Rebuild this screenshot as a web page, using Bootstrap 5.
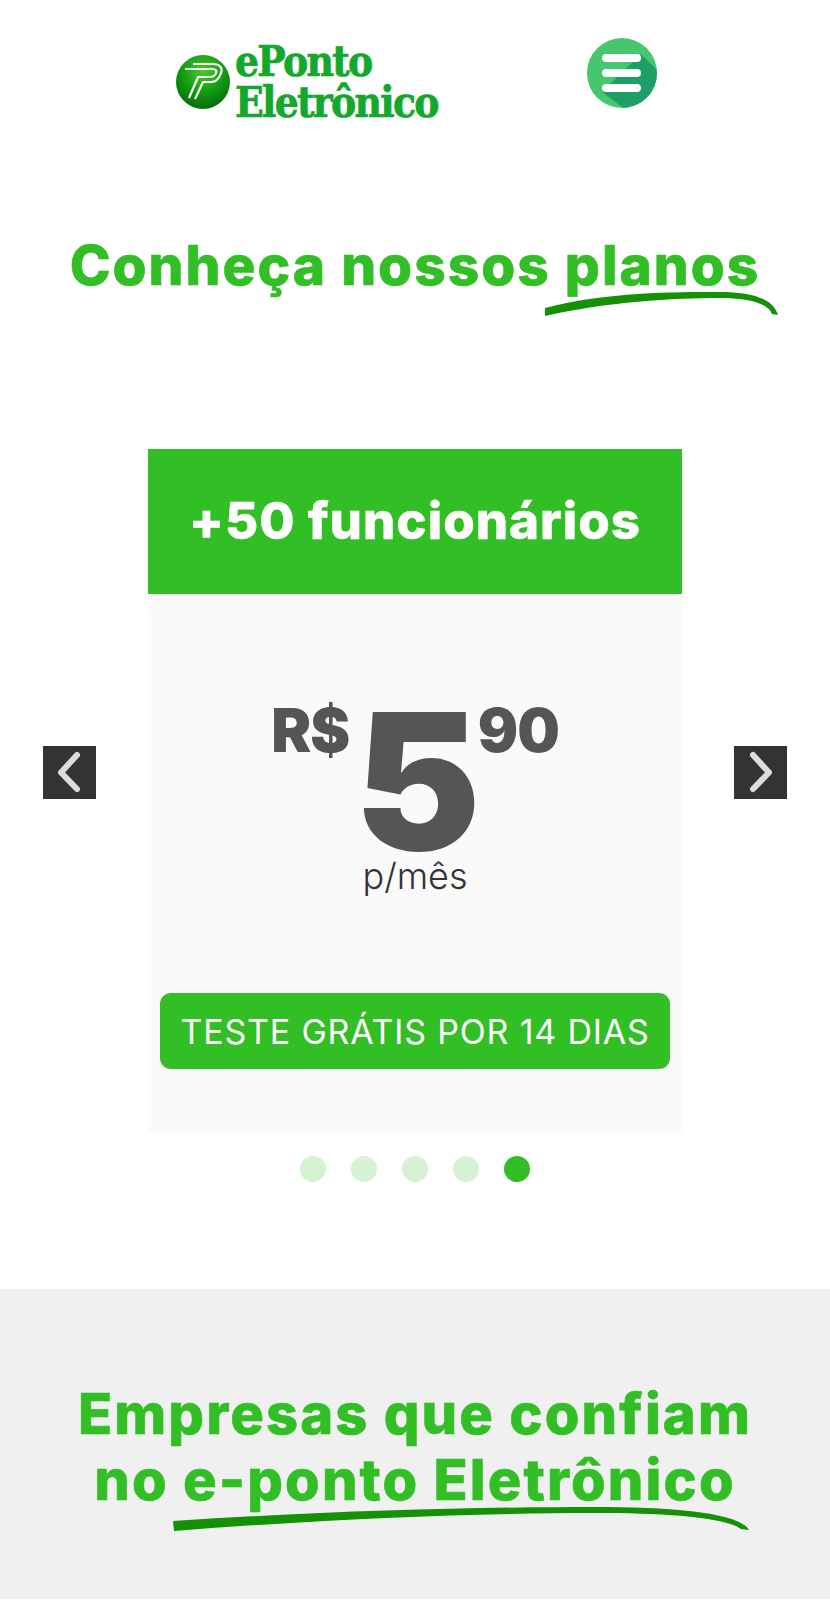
<!DOCTYPE html>
<html lang="pt-BR">
<head>
  <meta charset="UTF-8">
  <title>ePonto Eletrônico</title>
  <link href="https://cdn.jsdelivr.net/npm/bootstrap@5.3.2/dist/css/bootstrap.min.css" rel="stylesheet">
  <style>
    body {
      font-family: "Inter", "Liberation Sans", sans-serif;
      background-color: #fff;
    }

    .topo {
      height: 145px;
      padding: 38px 0 0 176px;
    }

    .logo-texto {
      width: 208px;
      margin-left: 5px;
      margin-top: 3px;
      font-family: "DejaVu Serif Condensed", "DejaVu Serif", serif;
      font-stretch: condensed;
      font-weight: 700;
      font-size: 42px;
      line-height: 41px;
      letter-spacing: -1.7px;
      color: #12a82c;
      -webkit-text-stroke: 0.7px #12a82c;
    }

    .btn-menu {
      margin-left: 144px;
      width: 70px;
      height: 70px;
      border: 0;
      padding: 0;
      background: none;
    }

    .titulo {
      font-weight: 800;
      color: #32be25;
      text-align: center;
      margin: 0;
      -webkit-text-stroke: 0.6px #32be25;
    }

    .titulo-planos {
      font-size: 55px;
      line-height: 66px;
      padding-top: 87px;
      letter-spacing: 2px;
    }

    .grifo {
      position: relative;
      display: inline-block;
    }

    .grifo svg {
      position: absolute;
      display: block;
    }

    .grifo-planos svg {
      left: -20px;
      top: 60px;
      width: 233px;
      height: 24px;
    }

    .grifo-empresas svg {
      left: -10px;
      top: 60px;
      width: 576px;
      height: 24px;
    }

    .carrossel {
      margin-top: 151px;
      padding: 0 43px;
    }

    .seta {
      width: 53px;
      height: 53px;
      margin-top: 297px;
      border: 0;
      padding: 0;
      background-color: #333;
    }

    .plano {
      width: 534px;
      height: 684px;
      background-color: #fafafa;
      border: 0;
      border-radius: 0;
    }

    .plano-topo {
      height: 145px;
      background-color: #32be25;
      color: #fff;
      font-size: 51px;
      font-weight: 800;
      letter-spacing: 1px;
      -webkit-text-stroke: 0.4px #fff;
    }

    .preco {
      margin-top: 102px;
      color: #555;
      font-weight: 900;
      height: 175px;
    }

    .preco-menor {
      font-size: 60px;
      line-height: 56px;
      margin-top: 6px;
      letter-spacing: -1px;
    }

    .preco-maior {
      font-size: 190px;
      line-height: 150px;
      margin: 10px -3px 0 5px;
    }

    .por-mes {
      font-size: 36px;
      line-height: 40px;
      font-weight: 300;
      color: #333;
      text-align: center;
      margin-top: -15px;
    }

    .btn-teste {
      width: 510px;
      height: 76px;
      margin: 97px 0 0 12px;
      padding: 0;
      border: 0;
      border-radius: 11px;
      background-color: #32be25;
      color: #fff;
      font-size: 34px;
      font-weight: 400;
      letter-spacing: 0.8px;
    }

    .pontos {
      margin-top: 23px;
      gap: 25px;
    }

    .ponto {
      width: 26px;
      height: 26px;
      border-radius: 50%;
      background-color: #d5f2d2;
    }

    .ponto-ativo {
      background-color: #32be25;
    }

    .empresas {
      margin-top: 107px;
      height: 310px;
      background-color: #f0f0f0;
      padding-top: 92px;
    }

    .titulo-empresas {
      font-size: 56px;
      line-height: 66px;
      letter-spacing: 2.1px;
    }
  </style>
</head>
<body>
  <header class="topo d-flex align-items-start">
    <svg width="54" height="54" viewBox="0 0 54 54" class="flex-shrink-0" style="margin-top:17px">
      <defs>
        <radialGradient id="esfera" cx="0.5" cy="0.3" r="0.8">
          <stop offset="0" stop-color="#4fc92a"/>
          <stop offset="0.5" stop-color="#0f9a12"/>
          <stop offset="1" stop-color="#045c08"/>
        </radialGradient>
      </defs>
      <circle cx="27" cy="27" r="27" fill="url(#esfera)"/>
      <path d="M17 9H37C44 9 47 13 45 18C43 24 39 27 35 27H27L19 44" fill="none" stroke="#fff" stroke-width="2.2"/>
      <path d="M9 14H36C40 14 41 16 40 18C39 21 37 22 34 22H22L13 43" fill="none" stroke="#fff" stroke-width="2.2"/>
    </svg>
    <div class="logo-texto">ePonto<br>Eletrônico</div>
    <button class="btn-menu flex-shrink-0" type="button" aria-label="Menu">
      <svg width="70" height="70" viewBox="0 0 70 70" class="d-block">
        <defs><clipPath id="disco"><circle cx="35" cy="35" r="35"/></clipPath></defs>
        <circle cx="35" cy="35" r="35" fill="#45c66f"/>
        <path d="M54 16L80 42V80H50L15 54Z" fill="#1f9f68" clip-path="url(#disco)"/>
        <rect x="15" y="16" width="39" height="8" rx="4" fill="#fff"/>
        <rect x="15" y="31" width="39" height="8" rx="4" fill="#fff"/>
        <rect x="15" y="46" width="39" height="8" rx="4" fill="#fff"/>
      </svg>
    </button>
  </header>

  <h1 class="titulo titulo-planos">Conheça nossos <span class="grifo grifo-planos">planos
    <svg viewBox="0 0 233 24" preserveAspectRatio="none"><path d="M0 16C60 0 130 0 175 0C205 0 228 6 233 23L227 22C222 10 200 6 175 6C130 6 60 10 0 24Z" fill="#149104"/></svg>
  </span></h1>

  <section class="carrossel d-flex justify-content-between align-items-start">
    <button class="seta flex-shrink-0" type="button" aria-label="Anterior">
      <svg width="53" height="53" viewBox="0 0 53 53" class="d-block"><path d="M34 9L18 26.5L34 43" fill="none" stroke="#ddd" stroke-width="6" stroke-linecap="round" stroke-linejoin="round"/></svg>
    </button>
    <div class="card plano flex-shrink-0">
      <div class="plano-topo d-flex align-items-center justify-content-center">+50 funcionários</div>
      <div class="preco d-flex justify-content-center align-items-start">
        <span class="preco-menor">R$</span>
        <span class="preco-maior">5</span>
        <span class="preco-menor">90</span>
      </div>
      <div class="por-mes">p/mês</div>
      <button class="btn-teste" type="button">TESTE GRÁTIS POR 14 DIAS</button>
    </div>
    <button class="seta flex-shrink-0" type="button" aria-label="Próximo">
      <svg width="53" height="53" viewBox="0 0 53 53" class="d-block"><path d="M19 9L35 26.5L19 43" fill="none" stroke="#ddd" stroke-width="6" stroke-linecap="round" stroke-linejoin="round"/></svg>
    </button>
  </section>

  <div class="pontos d-flex justify-content-center">
    <span class="ponto"></span>
    <span class="ponto"></span>
    <span class="ponto"></span>
    <span class="ponto"></span>
    <span class="ponto ponto-ativo"></span>
  </div>

  <section class="empresas">
    <h2 class="titulo titulo-empresas">Empresas que confiam<br>no <span class="grifo grifo-empresas">e-ponto Eletrônico
      <svg viewBox="0 0 574 24" preserveAspectRatio="none"><path d="M0 14C150 4 300 0 420 0C500 0 565 6 574 23L566 22C550 10 490 6 420 6C300 6 150 12 1 24Z" fill="#149104"/></svg>
    </span></h2>
  </section>

  <script src="https://cdn.jsdelivr.net/npm/bootstrap@5.3.2/dist/js/bootstrap.bundle.min.js"></script>
</body>
</html>
